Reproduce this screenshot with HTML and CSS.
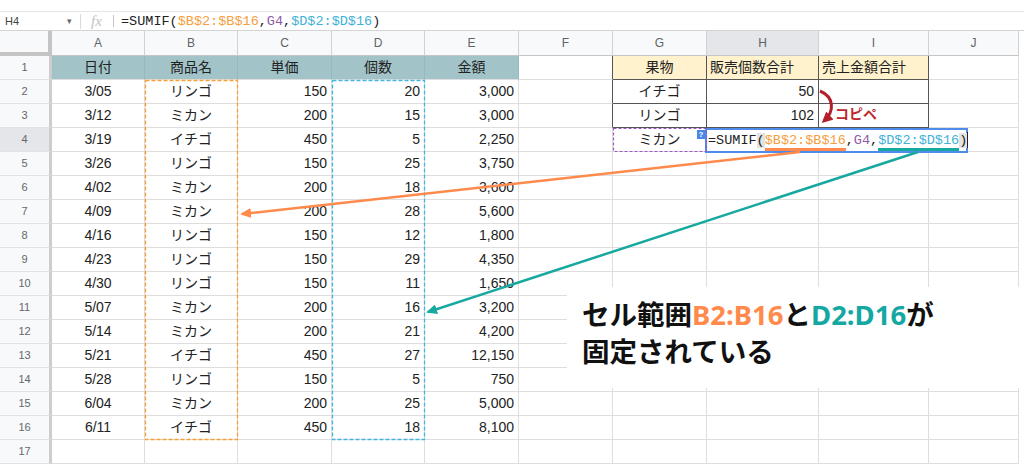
FILE: index.html
```html
<!DOCTYPE html>
<html lang="ja">
<head>
  <meta charset="UTF-8" />
  <title>SUMIF 絶対参照</title>
  <link rel="stylesheet" href="styles.css">
</head>
<body>
<div class="page">
  <div class="top-gap"></div>

  <!-- formula bar -->
  <div class="fbar">
    <div class="namebox">H4</div>
    <div class="caret">▾</div>
    <div class="sep"></div>
    <div class="fx">fx</div>
    <div class="sep small"></div>
    <div class="formula">=SUMIF(<span class="ref-b">$B$2:$B$16</span>,<span class="ref-g">G4</span>,<span class="ref-d">$D$2:$D$16</span>)</div>
  </div>

  <!-- sheet grid -->
  <div class="sheet">
    <div class="row colhead">
      <div class="corner"></div><div>A</div><div>B</div><div>C</div><div>D</div><div>E</div><div>F</div><div>G</div><div class="sel">H</div><div>I</div><div>J</div>
    </div>
    <div class="row">
      <div class="rh">1</div><div class="hd">日付</div><div class="hd">商品名</div><div class="hd">単価</div><div class="hd">個数</div><div class="hd">金額</div><div class="edge"></div><div class="fr ctr tb">果物</div><div class="fr tb">販売個数合計</div><div class="fr tb">売上金額合計</div><div></div>
    </div>
    <div class="row">
      <div class="rh">2</div><div class="ctr">3/05</div><div class="ctr">リンゴ</div><div class="num">150</div><div class="num">20</div><div class="num">3,000</div><div class="edge"></div><div class="ctr tb">イチゴ</div><div class="num tb">50</div><div class="tb"></div><div></div>
    </div>
    <div class="row">
      <div class="rh">3</div><div class="ctr">3/12</div><div class="ctr">ミカン</div><div class="num">200</div><div class="num">15</div><div class="num">3,000</div><div class="edge"></div><div class="ctr tb">リンゴ</div><div class="num tb">102</div><div class="tb"></div><div></div>
    </div>
    <div class="row">
      <div class="rh sel">4</div><div class="ctr">3/19</div><div class="ctr">イチゴ</div><div class="num">450</div><div class="num">5</div><div class="num">2,250</div><div></div><div class="ctr">ミカン</div><div></div><div></div><div></div>
    </div>
    <div class="row">
      <div class="rh">5</div><div class="ctr">3/26</div><div class="ctr">リンゴ</div><div class="num">150</div><div class="num">25</div><div class="num">3,750</div><div></div><div></div><div></div><div></div><div></div>
    </div>
    <div class="row">
      <div class="rh">6</div><div class="ctr">4/02</div><div class="ctr">ミカン</div><div class="num">200</div><div class="num">18</div><div class="num">3,600</div><div></div><div></div><div></div><div></div><div></div>
    </div>
    <div class="row">
      <div class="rh">7</div><div class="ctr">4/09</div><div class="ctr">ミカン</div><div class="num">200</div><div class="num">28</div><div class="num">5,600</div><div></div><div></div><div></div><div></div><div></div>
    </div>
    <div class="row">
      <div class="rh">8</div><div class="ctr">4/16</div><div class="ctr">リンゴ</div><div class="num">150</div><div class="num">12</div><div class="num">1,800</div><div></div><div></div><div></div><div></div><div></div>
    </div>
    <div class="row">
      <div class="rh">9</div><div class="ctr">4/23</div><div class="ctr">リンゴ</div><div class="num">150</div><div class="num">29</div><div class="num">4,350</div><div></div><div></div><div></div><div></div><div></div>
    </div>
    <div class="row">
      <div class="rh">10</div><div class="ctr">4/30</div><div class="ctr">リンゴ</div><div class="num">150</div><div class="num">11</div><div class="num">1,650</div><div></div><div></div><div></div><div></div><div></div>
    </div>
    <div class="row">
      <div class="rh">11</div><div class="ctr">5/07</div><div class="ctr">ミカン</div><div class="num">200</div><div class="num">16</div><div class="num">3,200</div><div></div><div></div><div></div><div></div><div></div>
    </div>
    <div class="row">
      <div class="rh">12</div><div class="ctr">5/14</div><div class="ctr">ミカン</div><div class="num">200</div><div class="num">21</div><div class="num">4,200</div><div></div><div></div><div></div><div></div><div></div>
    </div>
    <div class="row">
      <div class="rh">13</div><div class="ctr">5/21</div><div class="ctr">イチゴ</div><div class="num">450</div><div class="num">27</div><div class="num">12,150</div><div></div><div></div><div></div><div></div><div></div>
    </div>
    <div class="row">
      <div class="rh">14</div><div class="ctr">5/28</div><div class="ctr">リンゴ</div><div class="num">150</div><div class="num">5</div><div class="num">750</div><div></div><div></div><div></div><div></div><div></div>
    </div>
    <div class="row">
      <div class="rh">15</div><div class="ctr">6/04</div><div class="ctr">ミカン</div><div class="num">200</div><div class="num">25</div><div class="num">5,000</div><div></div><div></div><div></div><div></div><div></div>
    </div>
    <div class="row">
      <div class="rh">16</div><div class="ctr">6/11</div><div class="ctr">イチゴ</div><div class="num">450</div><div class="num">18</div><div class="num">8,100</div><div></div><div></div><div></div><div></div><div></div>
    </div>
    <div class="row">
      <div class="rh">17</div><div></div><div></div><div></div><div></div><div></div><div></div><div></div><div></div><div></div><div></div>
    </div>
  </div>

  <!-- cell editor on H4 -->
  <div class="help">?</div>
  <div class="editor">=SUMIF<span class="paren">(</span><span class="ref-b ul-o">$B$2:$B$16</span>,<span class="ref-g">G4</span>,<span class="ref-d ul-t">$D$2:$D$16</span><span class="paren">)</span><span class="cursor"></span></div>

  <div class="copy">コピペ</div>

  <!-- ranges and arrows -->
  <svg class="overlay" width="1024" height="466" viewBox="0 0 1024 466">
    <defs>
      <marker id="head-o" markerWidth="11" markerHeight="10" refX="9" refY="5" orient="auto" markerUnits="userSpaceOnUse">
        <path d="M0,0 L11,5 L0,10 z" fill="#ff8a4c"/>
      </marker>
      <marker id="head-t" markerWidth="11" markerHeight="10" refX="9" refY="5" orient="auto" markerUnits="userSpaceOnUse">
        <path d="M0,0 L11,5 L0,10 z" fill="#17a89f"/>
      </marker>
      <marker id="head-r" markerWidth="11" markerHeight="11" refX="8" refY="5.5" orient="auto" markerUnits="userSpaceOnUse">
        <path d="M0,0 L11,5.5 L0,11 z" fill="#b3202a"/>
      </marker>
    </defs>
    <rect x="145.5" y="80.5" width="92" height="359" fill="none" stroke="#f6a03a" stroke-width="1.3" stroke-dasharray="4 2"/>
    <rect x="332.5" y="80.5" width="92" height="359" fill="none" stroke="#45b4dc" stroke-width="1.3" stroke-dasharray="4 2"/>
    <rect x="613.5" y="128.5" width="93" height="23" fill="none" stroke="#9b59c6" stroke-width="1.2" stroke-dasharray="3 2"/>
    <line x1="800" y1="152" x2="242" y2="214" stroke="#ff8a4c" stroke-width="2.5" marker-end="url(#head-o)"/>
    <line x1="918" y1="152" x2="428" y2="312" stroke="#17a89f" stroke-width="2.5" marker-end="url(#head-t)"/>
    <path d="M820 91 C834 97 835 111 824 121" fill="none" stroke="#b3202a" stroke-width="3" marker-end="url(#head-r)"/>
  </svg>

  <!-- annotation -->
  <div class="note">
    <div>セル範囲<span class="o">B2:B16</span>と<span class="t">D2:D16</span>が</div>
    <div>固定されている</div>
  </div>
</div>
</body>
</html>
```

FILE: styles.css
```css
body {
  margin: 0;
  background: #fff;
  color: #222;
  font-family: "Liberation Sans", "Noto Sans CJK JP", sans-serif;
}
.page {
  position: relative;
  width: 1024px;
  height: 466px;
  overflow: hidden;
}
.top-gap {
  height: 11px;
  border-bottom: 1px solid #e6e6e6;
}

/* formula bar */
.fbar {
  display: flex;
  align-items: center;
  height: 18px;
  border-bottom: 1px solid #d3d3d3;
}
.namebox {
  width: 62px;
  padding-left: 5px;
  font-size: 11px;
  color: #444;
}
.caret {
  width: 13px;
  font-size: 9px;
  color: #666;
}
.sep {
  width: 1px;
  height: 15px;
  background: #dadada;
}
.sep.small {
  height: 12px;
  background: #c4c4c4;
}
.fx {
  width: 22px;
  padding-left: 10px;
  font-family: "Liberation Serif", serif;
  font-style: italic;
  font-size: 15px;
  color: #c2c2c2;
}
.formula {
  padding-left: 7px;
  font-family: "Liberation Mono", monospace;
  font-size: 13.5px;
  color: #222;
}
.ref-b { color: #f5a03e; }
.ref-g { color: #8e5aa8; }
.ref-d { color: #3fb1d8; }

/* grid */
.row {
  display: grid;
  grid-template-columns: 52px 93px 93px 94px 93px 94px 94px 94px 112px 110px 90px;
  height: 24px;
}
.row > div {
  box-sizing: border-box;
  border-right: 1px solid #dedede;
  border-bottom: 1px solid #dedede;
  font-size: 14px;
  line-height: 23px;
  padding: 0 3px;
  white-space: nowrap;
  overflow: hidden;
}
.colhead {
  height: 25px;
}
.colhead > div {
  background: #f8f9fa;
  border-right-color: #d2d2d2;
  border-bottom-color: #c6c6c6;
  text-align: center;
  font-size: 12px;
  line-height: 24px;
  color: #5f6368;
}
.colhead > .corner {
  border-right: 4px solid #c4c4c4;
  border-bottom: 4px solid #c4c4c4;
}
.row > .rh {
  background: #f8f9fa;
  border-right: 3px solid #cdcdcd;
  border-bottom-color: #e2e2e2;
  text-align: center;
  font-size: 11px;
  color: #666;
}
.row > .sel {
  background: #e4e6e9;
}
.ctr { text-align: center; }
.row > .num {
  text-align: right;
  padding-right: 4px;
}
.row > .hd {
  background: #a2c4c9;
  border-right-color: #94b9be;
  text-align: center;
}
.fr { background: #fff2cc; }
.row > .tb {
  border-right-color: #555;
  border-bottom-color: #555;
}
.row > .edge {
  border-right-color: #555;
}

/* H4 editor */
.editor {
  position: absolute;
  left: 705px;
  top: 128px;
  width: 263px;
  height: 25px;
  box-sizing: border-box;
  border: 2px solid #4f8bea;
  background: #fff;
  padding-left: 1px;
  font-family: "Liberation Mono", monospace;
  font-size: 13.5px;
  line-height: 21px;
  white-space: nowrap;
}
.paren { background: #e3e3e3; }
.ul-o { border-bottom: 3px solid #ff8a4c; }
.ul-t { border-bottom: 3px solid #17a89f; }
.cursor {
  display: inline-block;
  width: 1px;
  height: 16px;
  background: #222;
  vertical-align: middle;
}
.help {
  position: absolute;
  left: 697px;
  top: 130px;
  width: 8px;
  height: 9px;
  background: #4a86e8;
  color: #fff;
  font-size: 8px;
  font-weight: 700;
  line-height: 9px;
  text-align: center;
}
.copy {
  position: absolute;
  left: 835px;
  top: 104px;
  font-family: "Noto Sans CJK JP", sans-serif;
  font-size: 14px;
  font-weight: 700;
  line-height: 18px;
  color: #c0272d;
}
.overlay {
  position: absolute;
  left: 0;
  top: 0;
  pointer-events: none;
}

/* annotation box */
.note {
  position: absolute;
  left: 567px;
  top: 287px;
  width: 453px;
  height: 101px;
  box-sizing: border-box;
  padding: 9px 0 0 15px;
  background: #fff;
  font-family: "Noto Sans", "Noto Sans CJK JP", sans-serif;
  font-weight: 700;
  font-size: 27.5px;
  line-height: 37px;
  color: #111;
  white-space: nowrap;
}
.note .o { color: #ff8a4c; }
.note .t { color: #15a8a3; }
```
